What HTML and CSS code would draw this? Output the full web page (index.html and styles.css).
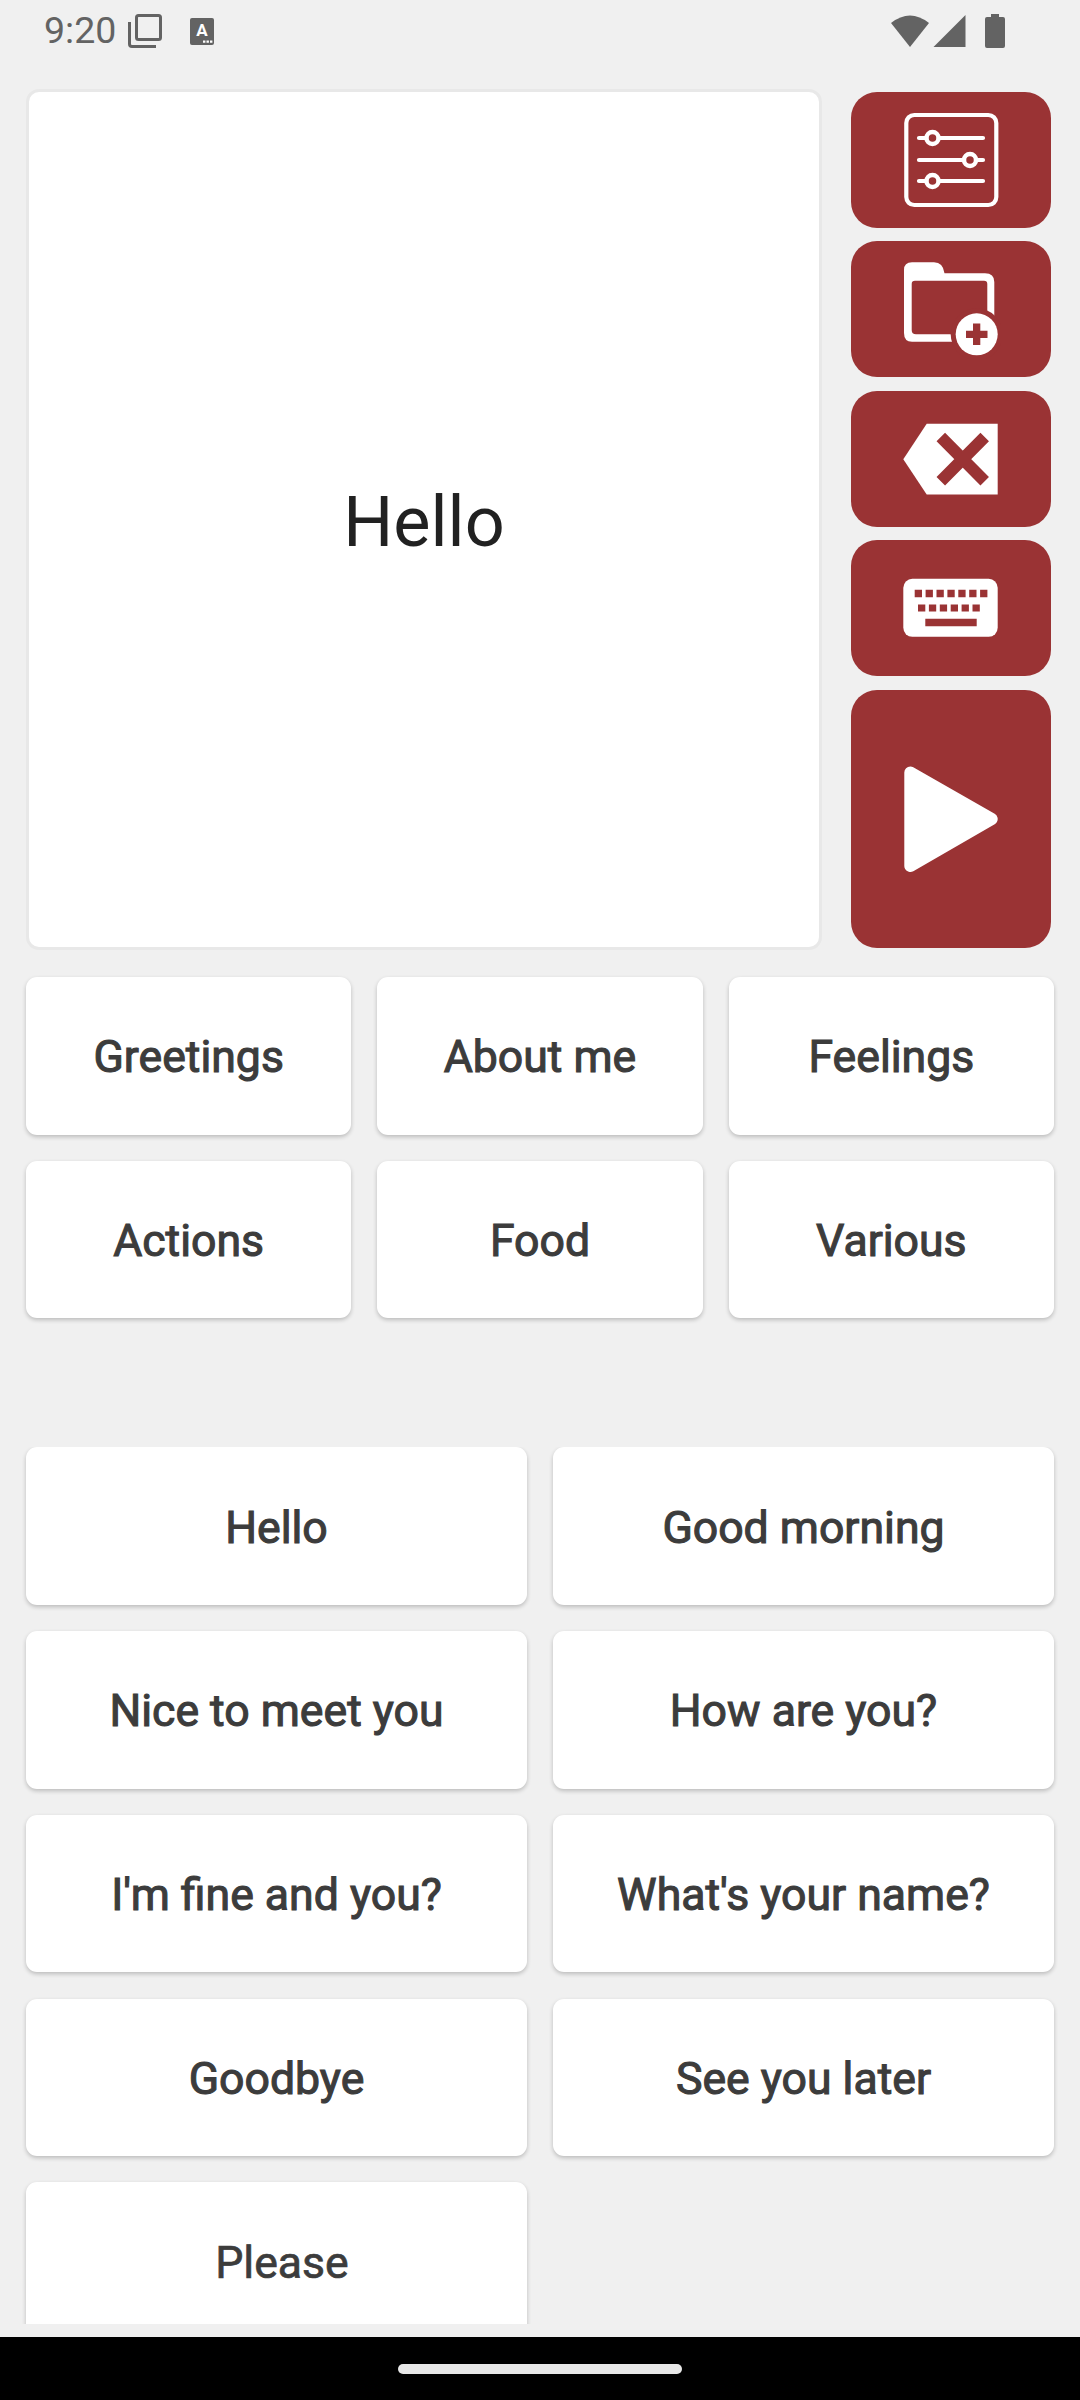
FILE: index.html
```html
<!DOCTYPE html>
<html lang="en">
<head>
	<meta charset="utf-8">
	<title>Talk board</title>
	<link rel="stylesheet" href="styles.css">
</head>
<body>

	<!-- status bar -->
	<div class="status">
		<span class="status__time">9:20</span>
		<svg class="status__copy" width="34" height="34" viewBox="0 0 34 34">
			<rect x="8.5" y="1.5" width="24" height="24" rx="2" class="status__line" />
			<path d="M1.5 8 V30 Q1.5 32.5 4 32.5 H28" class="status__line" />
		</svg>
		<svg class="status__kbd" width="24" height="27" viewBox="0 0 24 27">
			<rect width="24" height="27" rx="2" fill="#636363" />
			<text x="12" y="18" class="status__kbd-text">A</text>
			<path d="M13 22.5h2.4v2.2H13z M16.5 22.5h2.4v2.2h-2.4z M20 22.5h2.4v2.2H20z" fill="#fff" />
		</svg>
		<span class="status__right">
			<svg width="40" height="33" viewBox="0 0 40 33"><path d="M20 33 L1 9 Q20 -6 39 9 Z" fill="#636363" /></svg>
			<svg class="status__cell" width="33" height="33" viewBox="0 0 33 33"><path d="M0.5 33 L32.5 1 V33 Z" fill="#636363" /></svg>
			<svg class="status__batt" width="20" height="34" viewBox="0 0 20 34"><path d="M6 0 H14 V3 H18 Q20 3 20 5 V32 Q20 34 18 34 H2 Q0 34 0 32 V5 Q0 3 2 3 H6 Z" fill="#636363" /></svg>
		</span>
	</div>

	<!-- display + action buttons -->
	<div class="top">
		<div class="display">Hello</div>
		<div class="actions">
			<button class="action">
				<svg width="100" height="100" viewBox="0 0 100 100">
					<rect x="5.3" y="5" width="90" height="90" rx="8" class="icon__line" />
					<path d="M18 28 H82 M18 50 H82 M18 71 H82" class="icon__line" />
					<circle cx="31.5" cy="28" r="6" class="icon__knob" />
					<circle cx="69" cy="50" r="6" class="icon__knob" />
					<circle cx="31.5" cy="71" r="6" class="icon__knob" />
				</svg>
			</button>
			<button class="action">
				<svg width="100" height="100" viewBox="0 0 100 100">
					<path fill-rule="evenodd" fill="#fff" d="M11 3.3 H33 Q42 3.3 43.5 14.3 H84 Q93.3 14.3 93.3 23 V82.7 H11 Q3 82.7 3 74 V11 Q3 3.3 11 3.3 Z M14 21.7 Q10.7 21.7 10.7 25 V71 Q10.7 75.3 15 75.3 H86.3 V25 Q86.3 21.7 83 21.7 Z" />
					<circle cx="75.7" cy="75.3" r="26" fill="#9a3334" />
					<circle cx="75.7" cy="75.3" r="21" fill="#fff" />
					<path d="M72 64.5 H79.3 V71.7 H86.5 V79 H79.3 V86 H72 V79 H65 V71.7 H72 Z" fill="#9a3334" />
				</svg>
			</button>
			<button class="action">
				<svg width="100" height="100" viewBox="0 0 100 100">
					<path d="M2.3 50.2 L25.7 14.8 H96.7 V85.5 H25.7 Z" fill="#fff" />
					<path d="M39.8 28 L83.7 72.2 M83.7 28 L39.8 72.2" class="icon__cross" />
				</svg>
			</button>
			<button class="action">
				<svg width="100" height="100" viewBox="0 0 100 100">
					<rect x="2.3" y="20.8" width="94.4" height="58" rx="9" fill="#fff" />
					<path fill="#9a3334" d="M13.7 31.8h7.3v7.4h-7.3z M24.6 31.8h7.3v7.4h-7.3z M35.5 31.8h7.3v7.4h-7.3z M46.4 31.8h7.3v7.4h-7.3z M57.3 31.8h7.3v7.4h-7.3z M68.2 31.8h7.3v7.4h-7.3z M79.1 31.8h7.3v7.4h-7.3z M17 46.5h7.3v7h-7.3z M27.9 46.5h7.3v7h-7.3z M38.8 46.5h7.3v7h-7.3z M49.7 46.5h7.3v7h-7.3z M60.6 46.5h7.3v7h-7.3z M71.5 46.5h7.3v7h-7.3z M24.3 60.8h51.4v7.4H24.3z" />
				</svg>
			</button>
			<button class="action action--play">
				<svg width="100" height="110" viewBox="0 0 100 110">
					<path d="M9.3 8.5 L90.7 55 L9.3 102 Z" class="icon__play" />
				</svg>
			</button>
		</div>
	</div>

	<!-- categories -->
	<div class="cats">
		<div class="card">Greetings</div>
		<div class="card">About me</div>
		<div class="card">Feelings</div>
		<div class="card">Actions</div>
		<div class="card">Food</div>
		<div class="card">Various</div>
	</div>

	<!-- phrases, the last row is cut off by the scroll area -->
	<div class="phrases">
		<div class="card">Hello</div>
		<div class="card">Good morning</div>
		<div class="card">Nice to meet you</div>
		<div class="card">How are you?</div>
		<div class="card">I'm fine and you?</div>
		<div class="card">What's your name?</div>
		<div class="card">Goodbye</div>
		<div class="card">See you later</div>
		<div class="card card--pressed">Please</div>
	</div>

	<div class="nav"><span class="nav__handle"></span></div>

</body>
</html>
```

FILE: styles.css
```css
html, body {
	margin: 0;
	height: 2400px;
}
body {
	display: flex;
	flex-direction: column;
	overflow: hidden;
	background: #f0f0f0;
	font-family: Roboto, sans-serif;
	color: #3c3c3c;
}

/* status bar */
.status {
	display: flex;
	align-items: flex-start;
	height: 89px;
	flex: none;
	padding-left: 44px;
	box-sizing: border-box;
	color: #636363;
}
.status__time {
	font-size: 37.5px;
	line-height: 1;
	margin-top: 12px;
}
.status__copy {
	margin: 14px 0 0 11.5px;
}
.status__kbd {
	margin: 18px 0 0 28px;
}
.status__kbd-text {
	font: bold 17px Roboto, sans-serif;
	fill: #fff;
	text-anchor: middle;
}
.status__line {
	fill: none;
	stroke: #636363;
	stroke-width: 3;
}
.status__right {
	display: flex;
	margin-left: auto;
	margin-top: 14px;
	padding-right: 75px;
}
.status__cell {
	margin-left: 3px;
}
.status__batt {
	margin-left: 19px;
}

/* top block */
.top {
	display: flex;
	flex: none;
	gap: 29px;
	height: 861px;
	margin: 0 29px 0 26px;
}
.display {
	flex: 1;
	display: flex;
	align-items: center;
	justify-content: center;
	padding-top: 4px;
	box-sizing: border-box;
	background: #fff;
	border: 3px solid #e8e8e8;
	border-radius: 13px;
	font-size: 70.2px;
	color: #212121;
}
.actions {
	display: flex;
	flex-direction: column;
	gap: 13.5px;
	width: 200px;
	padding: 2.5px 0 2px;
}
.action {
	display: flex;
	align-items: center;
	justify-content: center;
	flex: none;
	height: 136px;
	padding: 0;
	border: none;
	border-radius: 26px;
	background: #9a3334;
}
.action--play {
	flex: 1;
}
.icon__line {
	fill: none;
	stroke: #fff;
	stroke-width: 4.2;
	stroke-linecap: round;
}
.icon__knob {
	fill: #9a3334;
	stroke: #fff;
	stroke-width: 4.5;
}
.icon__cross {
	fill: none;
	stroke: #9a3334;
	stroke-width: 12;
}
.icon__play {
	fill: #fff;
	stroke: #fff;
	stroke-width: 12;
	stroke-linejoin: round;
}

/* cards */
.cats, .phrases {
	display: grid;
	gap: 26.25px 26px;
	padding: 0 26px;
	flex: none;
}
.cats {
	grid-template-columns: repeat(3, 1fr);
	margin-top: 27px;
}
.phrases {
	grid-template-columns: repeat(2, 1fr);
	grid-auto-rows: 157.5px;
	align-content: start;
	flex: 1;
	min-height: 0;
	overflow: hidden;
	margin: 129px 0 13px;
}
.card {
	display: flex;
	align-items: center;
	justify-content: center;
	height: 157.5px;
	padding-top: 3px;
	box-sizing: border-box;
	background: #fff;
	border-radius: 11px;
	box-shadow: 0 2px 4px rgba(0, 0, 0, .22);
	font-size: 44.6px;
	font-weight: 400;
	-webkit-text-stroke: 1.1px #3c3c3c; /* between regular and medium */
}
.card--pressed {
	padding-left: 11px;
	-webkit-text-stroke: .7px #3c3c3c;
}

/* nav bar */
.nav {
	display: flex;
	flex: none;
	align-items: flex-end;
	justify-content: center;
	height: 63px;
	padding-bottom: 26px;
	box-sizing: border-box;
	background: #000;
}
.nav__handle {
	width: 284px;
	height: 10px;
	border-radius: 5px;
	background: #e8e8e8;
}
```
